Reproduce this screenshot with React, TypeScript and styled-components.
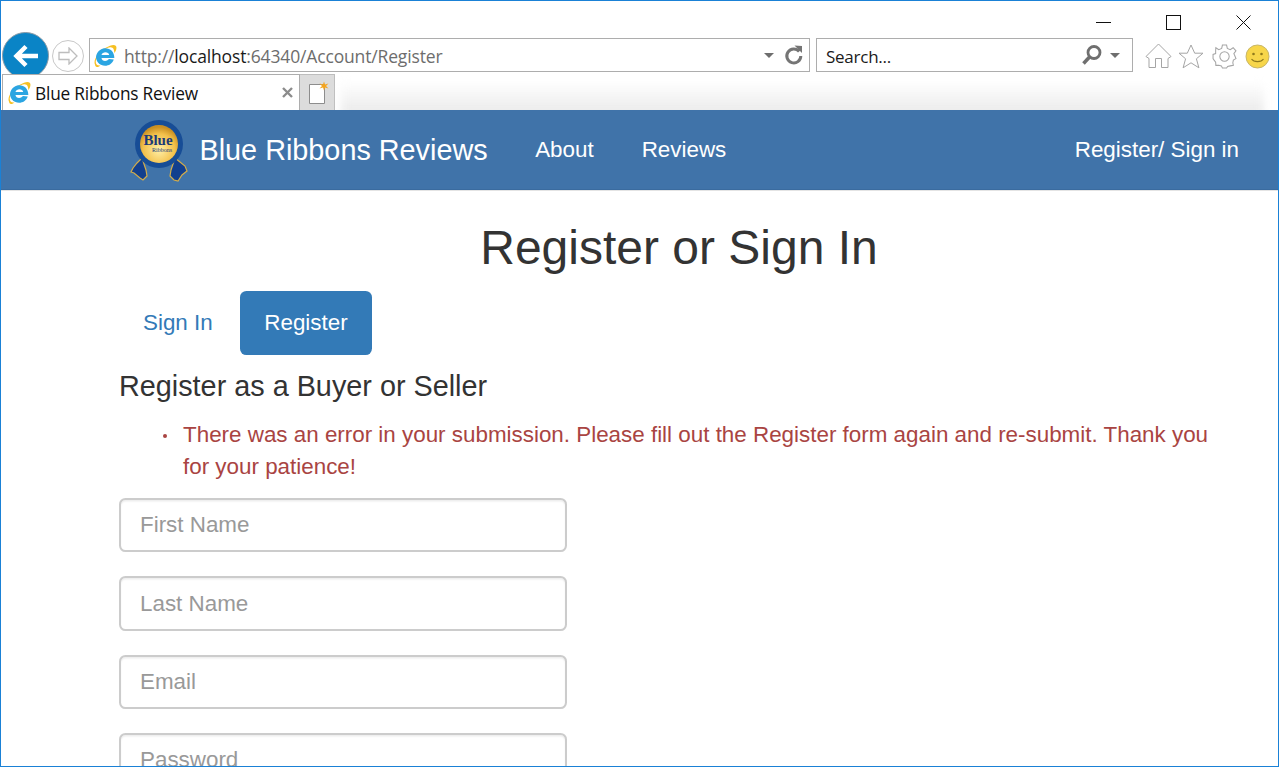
import React from "react";
import styled, { createGlobalStyle } from "styled-components";

const Global = createGlobalStyle`
  html, body { margin: 0; padding: 0; height: 100%; overflow: hidden; background: #fff; }
  * { box-sizing: border-box; }
`;

const Frame = styled.div`
  width: 1279px;
  height: 767px;
  border: 1px solid #1a81d6;
  display: flex;
  flex-direction: column;
  overflow: hidden;
  background: #fff;
  font-family: "Liberation Sans", Arial, sans-serif;
`;

const Chrome = styled.div`
  height: 109px;
  flex: none;
  display: flex;
  flex-direction: column;
  font-family: "Open Sans", "Noto Sans", sans-serif;
`;

const WindowControls = styled.div`
  height: 32px;
  flex: none;
  display: flex;
  justify-content: flex-end;
  align-items: flex-start;
  padding: 14px 27px 0 0;
  gap: 55px;
`;

const WinIcon = styled.svg`
  width: 15px;
  height: 15px;
  display: block;
  flex: none;
`;

const Toolbar = styled.div`
  height: 41px;
  flex: none;
  display: flex;
  align-items: flex-start;
  padding-left: 1px;
`;

const BackButton = styled.div`
  width: 47px;
  height: 47px;
  margin-top: -1px;
  border-radius: 50%;
  background: #0a84c6;
  border: 1px solid #8a9aa6;
  flex: none;
  display: flex;
  align-items: center;
  justify-content: center;
`;

const ForwardButton = styled.div`
  width: 32px;
  height: 32px;
  margin: 7px 0 0 3px;
  border-radius: 50%;
  border: 1px solid #c8c8c8;
  flex: none;
  display: flex;
  align-items: center;
  justify-content: center;
`;

const AddressBox = styled.div`
  width: 721px;
  height: 34px;
  margin: 5px 0 0 5px;
  border: 1px solid #adadad;
  display: flex;
  align-items: center;
  padding: 0 5px 0 4px;
  flex: none;
  background: #fff;
`;

const UrlText = styled.span`
  font-size: 17.5px;
  color: #6d6d6d;
  margin-left: 7px;
  padding-top: 2px;
  flex: 1;
  white-space: nowrap;
  letter-spacing: -0.15px;
  b { font-weight: 400; color: #1a1a1a; }
`;

const Caret = styled.span<{ $gap?: number }>`
  width: 0;
  height: 0;
  border-left: 5px solid transparent;
  border-right: 5px solid transparent;
  border-top: 5px solid #6e6e6e;
  flex: none;
  margin-left: ${(p) => p.$gap ?? 0}px;
`;

const RefreshIcon = styled.svg`
  width: 20px;
  height: 22px;
  margin-left: 10px;
  flex: none;
`;

const SearchBox = styled.div`
  width: 317px;
  height: 34px;
  margin: 5px 0 0 6px;
  border: 1px solid #adadad;
  display: flex;
  align-items: center;
  padding: 0 12px 0 9px;
  flex: none;
`;

const SearchText = styled.span`
  font-size: 17px;
  color: #1a1a1a;
  flex: 1;
  padding-top: 2px;
  letter-spacing: -0.25px;
`;

const ToolIcons = styled.div`
  display: flex;
  align-items: center;
  gap: 6px;
  margin: 10px 0 0 12px;
`;

const ToolIcon = styled.svg<{ $shift?: number }>`
  flex: none;
  display: block;
  margin-left: ${(p) => p.$shift ?? 0}px;
`;

const TabStrip = styled.div`
  height: 36px;
  flex: none;
  display: flex;
  align-items: stretch;
  position: relative;
  overflow: hidden;
  &::after {
    content: "";
    position: absolute;
    left: 340px;
    right: 14px;
    top: 8px;
    bottom: -6px;
    background: linear-gradient(#ffffff, #e8e8e8);
    filter: blur(4px);
  }
`;

const Tab = styled.div`
  width: 298px;
  margin-left: 1px;
  border: 1px solid #adadad;
  border-bottom: none;
  display: flex;
  align-items: center;
  padding: 0 6px 0 5px;
  background: #fff;
  flex: none;
`;

const TabTitle = styled.span`
  font-size: 17.3px;
  color: #111;
  margin-left: 4px;
  padding-top: 2px;
  flex: 1;
  letter-spacing: -0.2px;
  white-space: nowrap;
`;

const TabClose = styled.svg`
  width: 11px;
  height: 11px;
  flex: none;
`;

const NewTab = styled.div`
  width: 35px;
  background: #dcdcdc;
  border: 1px solid #bdbdbd;
  border-left: none;
  border-bottom: none;
  display: flex;
  align-items: center;
  justify-content: center;
  flex: none;
`;

const NavBar = styled.nav`
  height: 80px;
  flex: none;
  background: #4073a9;
  border-bottom: 1px solid #3a6b9f;
  display: flex;
  align-items: center;
  padding: 0 39px 0 128px;
  color: #fff;
  box-shadow: 0 1px 0 #e4e4e4;
`;

const Brand = styled.a`
  display: flex;
  align-items: center;
  font-size: 28.8px;
  color: #fff;
  margin-right: 47.5px;
  white-space: nowrap;
`;

const BrandName = styled.span`
  padding-top: 2px;
`;

const BrandLogo = styled.svg`
  width: 61px;
  height: 64px;
  margin-right: 9.5px;
  flex: none;
`;

const NavLink = styled.a`
  font-size: 22.4px;
  color: #fff;
  margin-right: 48px;
  white-space: nowrap;
`;

const NavRight = styled.a`
  font-size: 22.4px;
  color: #fff;
  margin-left: auto;
  white-space: nowrap;
`;

const Content = styled.main`
  flex: 1;
  min-height: 0;
  padding: 0 39px 0 118px;
  color: #333;
`;

const Title = styled.h1`
  font-weight: 500;
  font-size: 48px;
  line-height: 56px;
  text-align: center;
  color: #333;
  margin: 30px 0 15px;
`;

const Pills = styled.ul`
  display: flex;
  list-style: none;
  margin: 0;
  padding: 0;
  gap: 3.2px;
`;

const Pill = styled.li<{ $active?: boolean }>`
  font-size: 22.4px;
  line-height: 32px;
  padding: 16px 24.4px 16px 24px;
  border-radius: 6.4px;
  color: ${(p) => (p.$active ? "#fff" : "#337ab7")};
  background: ${(p) => (p.$active ? "#337ab7" : "transparent")};
`;

const SubHeading = styled.h4`
  font-weight: 500;
  font-size: 28.8px;
  line-height: 32px;
  margin: 15px 0 17px;
  color: #333;
`;

const ErrorList = styled.ul`
  margin: 0 0 15px;
  padding-left: 64px;
  color: #a94442;
  font-size: 22.4px;
  line-height: 32px;
  list-style: none;
`;

const ErrorItem = styled.li`
  position: relative;
  &::before {
    content: "";
    position: absolute;
    left: -20px;
    top: 15px;
    width: 4px;
    height: 4px;
    border-radius: 50%;
    background: #a94442;
  }
`;

const Field = styled.div`
  width: 448px;
  height: 54.4px;
  border: 2px solid #ccc;
  border-radius: 6.4px;
  margin-bottom: 24px;
  padding: 0 19px;
  display: flex;
  align-items: center;
  font-size: 22.4px;
  color: #999;
  box-shadow: inset 0 1.6px 1.6px rgba(0, 0, 0, 0.075);
  background: #fff;
`;

const IeIcon = styled.svg`
  flex: none;
  display: block;
`;

const IeLogo = ({ size }: { size: number }) => (
  <IeIcon width={size} height={size} viewBox="2 0.500 21.500 21.500">
    <path d="M3 20 C1 16 5 9 13 4 C18 1 23 0 23 4 C23 6 22 8 21 9 C21 6 20 3 17 3.500 C12 4 6 10 4 15 C3 18 4 21 8 20.500 C5 23 3 22 3 20 Z" fill="#f6c022" />
    <path d="M12.500 4.500 C17.500 4.500 21 8 21 13.500 L9 13.500 C9.300 16.500 13.500 17.500 16 14.500 L20.500 15 C18.500 20.500 13 22 8.500 20 C4.500 18 3 13 4.500 10 C6 7 9 4.500 12.500 4.500 Z M9 10.800 L16.200 10.800 C15.800 7.500 9.800 7.500 9 10.800 Z" fill="#2ba5e2" fillRule="evenodd" />
  </IeIcon>
);

export default function App() {
  return (
    <>
      <Global />
      <Frame>
        <Chrome>
          <WindowControls>
            <WinIcon viewBox="0 0 15 15"><path d="M0 7.500H15" stroke="#111" /></WinIcon>
            <WinIcon viewBox="0 0 15 15"><rect x="0.500" y="0.500" width="14" height="14" fill="none" stroke="#111" /></WinIcon>
            <WinIcon viewBox="0 0 15 15"><path d="M0.500 0.500L14.500 14.500M14.500 0.500L0.500 14.500" stroke="#111" /></WinIcon>
          </WindowControls>
          <Toolbar>
            <BackButton>
              <svg width="28" height="26" viewBox="0 0 28 26">
                <path d="M14 3.500L4.500 13L14 22.500M5 13H26" fill="none" stroke="#fff" strokeWidth="4.500" />
              </svg>
            </BackButton>
            <ForwardButton>
              <svg width="20" height="18" viewBox="0 0 20 18">
                <path d="M11 1L19 9L11 17V12.500H1V5.500H11Z" fill="none" stroke="#bdbdbd" strokeWidth="1.300" />
              </svg>
            </ForwardButton>
            <AddressBox>
              <IeLogo size={23} />
              <UrlText>http://<b>localhost</b>:64340/Account/Register</UrlText>
              <Caret />
              <RefreshIcon viewBox="0 0 20 22">
                <path d="M15.200 7.500A7 7 0 1 0 16.800 12" fill="none" stroke="#757575" strokeWidth="3" />
                <path d="M10.500 1.500L18 2V9Z" fill="#757575" />
              </RefreshIcon>
            </AddressBox>
            <SearchBox>
              <SearchText>Search...</SearchText>
              <svg width="22" height="22" viewBox="0 0 22 22">
                <circle cx="13" cy="8.500" r="6" fill="none" stroke="#6f6f6f" strokeWidth="2.800" />
                <path d="M8.500 13L2.500 19.500" stroke="#6f6f6f" strokeWidth="3.500" />
              </svg>
              <Caret $gap={7} />
            </SearchBox>
            <ToolIcons>
              <ToolIcon width="27" height="26" viewBox="0 0 27 26">
                <path d="M1 13.500L13.500 1L26 13.500L23 15.500V24.500H16.500V15.500H10.500V24.500H4V15.500Z" fill="none" stroke="#a5a5a5" />
              </ToolIcon>
              <ToolIcon width="26" height="25" viewBox="0 0 26 25">
                <path d="M13 1L16.700 9.200H25L18.400 14.800L20.900 23.800L13 18.800L5.100 23.800L7.600 14.800L1 9.200H9.300Z" fill="none" stroke="#a5a5a5" />
              </ToolIcon>
              <ToolIcon $shift={2} width="25" height="25" viewBox="0 0 24 24">
                <path d="M10 1H14L14.700 4.300L17.500 5.400L20.300 3.600L23 6.500L21 9.200L22 11.500L23 14L20.500 15.500L20 18L20.500 20.500L17.500 21L15 21.500L14 23H10L9 21L6.500 20.500L3.700 20.500L3.500 17.500L2 15.500L1 14V10L3.500 9.200L3.500 6.500L3.700 3.600L6.500 5.400L9.300 4.300Z" fill="none" stroke="#a5a5a5" />
                <circle cx="12" cy="12" r="4.500" fill="none" stroke="#a5a5a5" />
              </ToolIcon>
              <ToolIcon $shift={2} width="25" height="25" viewBox="0 0 25 25">
                <circle cx="12.500" cy="12.500" r="11.500" fill="#f7d64a" stroke="#c7b66a" />
                <circle cx="8.500" cy="10" r="1.300" fill="#8f7a1c" />
                <circle cx="16.500" cy="10" r="1.300" fill="#8f7a1c" />
                <path d="M6.500 15C9 18.500 16 18.500 18.500 15" fill="none" stroke="#8f7a1c" strokeWidth="1.200" />
              </ToolIcon>
            </ToolIcons>
          </Toolbar>
          <TabStrip>
            <Tab>
              <IeLogo size={23} />
              <TabTitle>Blue Ribbons Review</TabTitle>
              <TabClose viewBox="0 0 11 11">
                <path d="M1 1L10 10M10 1L1 10" stroke="#8c8c8c" strokeWidth="2.400" />
              </TabClose>
            </Tab>
            <NewTab>
              <svg width="24" height="26" viewBox="0 0 24 26">
                <path d="M4.500 4.500H19.500V23.500H4.500Z" fill="#fff" stroke="#8d8d8d" />
                <path d="M19 1.500L20 4.500L23.500 3.500L21 6L23.500 8.500L20 7.500L19 10.500L18 7.500L14.500 8.500L17 6L14.500 3.500L18 4.500Z" fill="#f5a51e" />
              </svg>
            </NewTab>
          </TabStrip>
        </Chrome>
        <NavBar>
          <Brand>
            <BrandLogo viewBox="0 0 61 64">
              <path d="M13 40L17 52L18 58L14 62L11 60L5 55L2 54L4 50L8 45Z" fill="#123f8e" stroke="#d4ad4a" strokeWidth="1.200" />
              <path d="M46 40L42 52L41 58L45 62L49 63L53 57L58 53L56 48L51 44Z" fill="#123f8e" stroke="#d4ad4a" strokeWidth="1.200" />
              <circle cx="30" cy="26" r="24" fill="#174d96" />
              <defs>
                <radialGradient id="gold" cx="50%" cy="65%" r="60%">
                  <stop offset="0%" stopColor="#fff0a8" />
                  <stop offset="70%" stopColor="#f3c04a" />
                  <stop offset="100%" stopColor="#c98f22" />
                </radialGradient>
              </defs>
              <circle cx="30" cy="26" r="19" fill="url(#gold)" />
              <text x="29" y="27" textAnchor="middle" fontFamily="Liberation Serif, serif" fontSize="15" fontWeight="700" fill="#1d3a78">Blue</text>
              <text x="33" y="34" textAnchor="middle" fontFamily="Liberation Serif, serif" fontSize="6" fill="#1d3a78">Ribbons</text>
            </BrandLogo>
            <BrandName>Blue Ribbons Reviews</BrandName>
          </Brand>
          <NavLink>About</NavLink>
          <NavLink>Reviews</NavLink>
          <NavRight>Register/ Sign in</NavRight>
        </NavBar>
        <Content>
          <Title>Register or Sign In</Title>
          <Pills>
            <Pill>Sign In</Pill>
            <Pill $active>Register</Pill>
          </Pills>
          <SubHeading>Register as a Buyer or Seller</SubHeading>
          <ErrorList>
            <ErrorItem>There was an error in your submission. Please fill out the Register form again and re-submit. Thank you for your patience!</ErrorItem>
          </ErrorList>
          <Field>First Name</Field>
          <Field>Last Name</Field>
          <Field>Email</Field>
          <Field>Password</Field>
        </Content>
      </Frame>
    </>
  );
}
